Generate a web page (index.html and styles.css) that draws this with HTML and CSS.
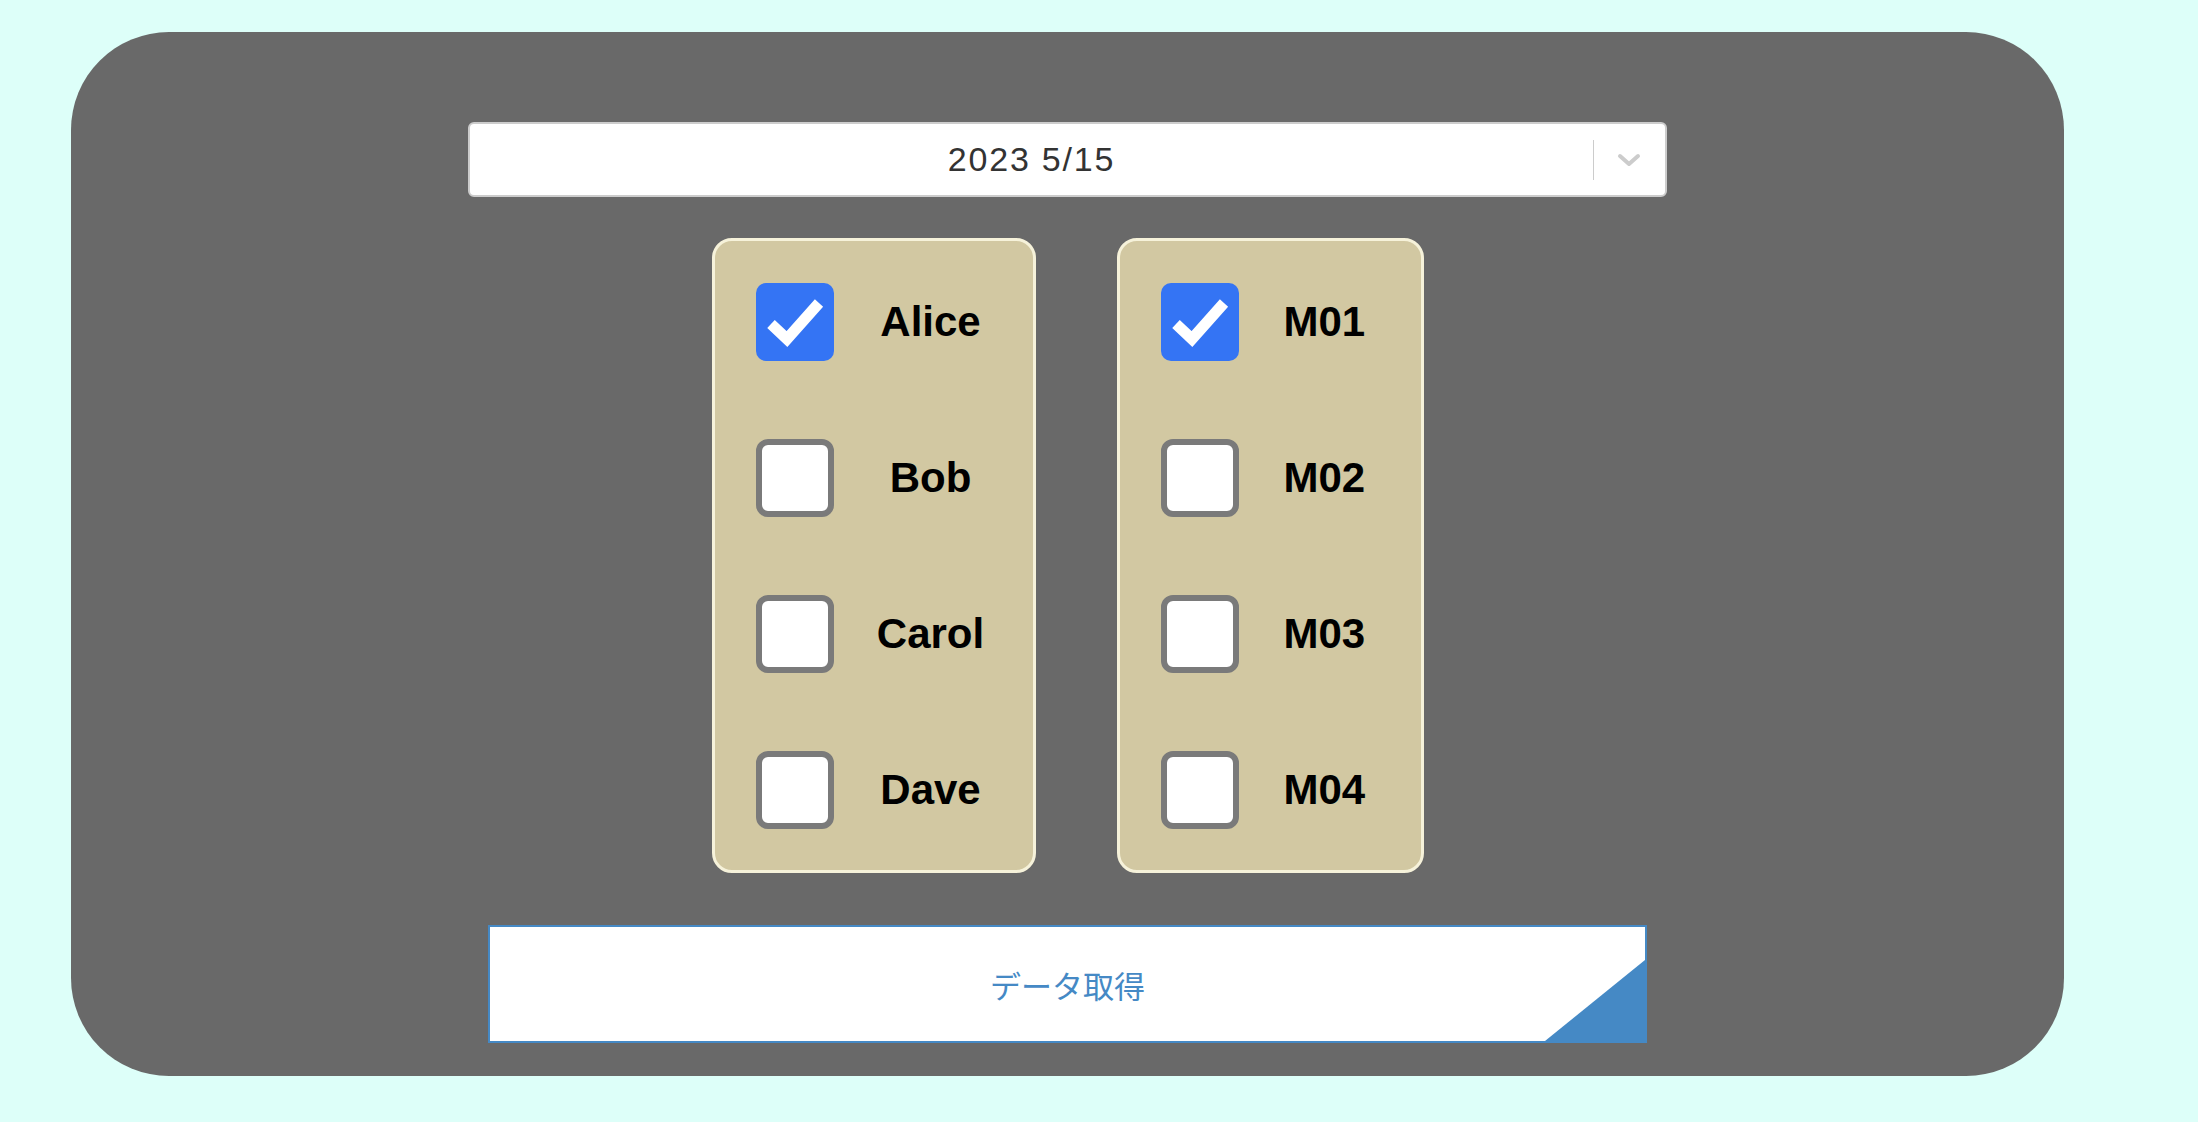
FILE: index.html
```html
<!DOCTYPE html>
<html>
<head>
    <title>データ取得</title>
    <link rel="stylesheet" href="styles.css">
</head>
<body>
    <div class="card">
        <div class="date-select">
            <div class="date-value">2023 5/15</div>
            <div class="select-indicators">
                <span class="indicator-separator"></span>
                <svg class="chevron" width="24" height="14" viewBox="0 0 24 14">
                    <polyline points="3,3 12,11 21,3" fill="none" stroke="#cccccc" stroke-width="4" stroke-linecap="round" stroke-linejoin="round"/>
                </svg>
            </div>
        </div>

        <div class="panels">
            <div class="panel panel-people">
                <label class="check-row">
                    <span class="check-box checked">
                        <svg width="78" height="78" viewBox="0 0 78 78"><polyline points="15,41 31,56 63,20" fill="none" stroke="#fff" stroke-width="11"/></svg>
                    </span>
                    <span class="check-label">Alice</span>
                </label>
                <label class="check-row">
                    <span class="check-box"></span>
                    <span class="check-label">Bob</span>
                </label>
                <label class="check-row">
                    <span class="check-box"></span>
                    <span class="check-label">Carol</span>
                </label>
                <label class="check-row">
                    <span class="check-box"></span>
                    <span class="check-label">Dave</span>
                </label>
            </div>

            <div class="panel panel-machines">
                <label class="check-row">
                    <span class="check-box checked">
                        <svg width="78" height="78" viewBox="0 0 78 78"><polyline points="15,41 31,56 63,20" fill="none" stroke="#fff" stroke-width="11"/></svg>
                    </span>
                    <span class="check-label">M01</span>
                </label>
                <label class="check-row">
                    <span class="check-box"></span>
                    <span class="check-label">M02</span>
                </label>
                <label class="check-row">
                    <span class="check-box"></span>
                    <span class="check-label">M03</span>
                </label>
                <label class="check-row">
                    <span class="check-box"></span>
                    <span class="check-label">M04</span>
                </label>
            </div>
        </div>

        <button class="fetch-button">データ取得</button>
    </div>
</body>
</html>
```

FILE: styles.css
```css
body {
    margin: 0;
    padding: 32px 0 0 71px;
    background-color: #ddfff9;
    font-family: "Liberation Sans", "Noto Sans CJK JP", sans-serif;
}

.card {
    width: 1993px;
    height: 1044px;
    box-sizing: border-box;
    padding: 90px 0 31px;
    background-color: #696969;
    border-radius: 98px;
    display: flex;
    flex-direction: column;
    align-items: center;
}

.date-select {
    width: 1199px;
    height: 75px;
    box-sizing: border-box;
    background-color: white;
    border: 2px solid #cccccc;
    border-radius: 6px;
    display: flex;
    align-items: center;
}

.date-value {
    flex: 1;
    text-align: center;
    font-size: 34px;
    letter-spacing: 1.8px;
    color: #333;
}

.select-indicators {
    display: flex;
    align-items: center;
    gap: 23px;
    padding-right: 24px;
}

.indicator-separator {
    width: 1px;
    height: 40px;
    background-color: #cccccc;
}

.chevron {
    display: block;
}

.panels {
    display: flex;
    gap: 81px;
    margin-top: 41px;
}

.panel {
    background-color: #d2c8a2;
    border: 3px solid #f6f2da;
    border-radius: 20px;
    padding: 42px 41px 41px;
    display: flex;
    flex-direction: column;
    gap: 78px;
}

.check-row {
    display: flex;
    align-items: center;
    gap: 36px;
    cursor: pointer;
}

.check-box {
    width: 78px;
    height: 78px;
    box-sizing: border-box;
    border: 6px solid #7a7a7a;
    border-radius: 12px;
    background-color: white;
    flex-shrink: 0;
}

.check-box.checked {
    border: none;
    border-radius: 10px;
    background-color: #3474f4;
}

.check-box svg {
    display: block;
}

.check-label {
    font-size: 42px;
    font-weight: bold;
    color: black;
    text-align: center;
}

.panel-people .check-label {
    width: 122px;
}

.panel-machines .check-row {
    gap: 45px;
}

.panel-machines .check-label {
    width: 96px;
    text-align: left;
}

.fetch-button {
    position: relative;
    overflow: hidden;
    width: 1159px;
    height: 118px;
    margin-top: 52px;
    background-color: white;
    border: 2px solid #4589c5;
    color: #4589c5;
    font-family: "Noto Sans CJK JP", sans-serif;
    font-size: 31px;
    cursor: pointer;
}

.fetch-button::after {
    content: "";
    position: absolute;
    right: 0;
    bottom: 0;
    width: 100px;
    height: 81px;
    background-color: #4589c5;
    clip-path: polygon(100% 0, 100% 100%, 0 100%);
}
```
